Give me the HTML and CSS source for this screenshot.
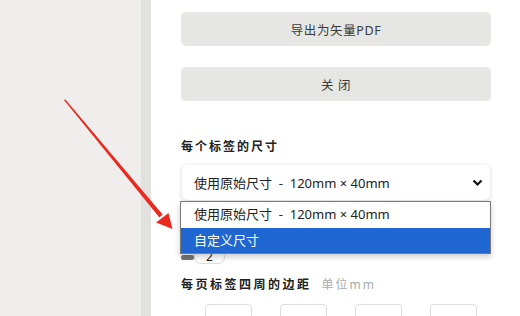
FILE: index.html
```html
<!DOCTYPE html>
<html lang="zh-CN">
<head>
  <meta charset="UTF-8" />
  <meta name="viewport" content="width=device-width, initial-scale=1.0"/>
  <title>导出设置</title>
  <link rel="stylesheet" href="styles.css">
</head>
<body>
  <div class="backdrop"></div>
  <div class="divider"></div>

  <main class="panel">
    <button class="btn">导出为矢量PDF</button>
    <button class="btn btn-close">关 闭</button>

    <h3 class="label">每个标签的尺寸</h3>
    <div class="select-wrap">
      <div class="select">
        <span>使用原始尺寸 &nbsp;-&nbsp; 120mm × 40mm</span>
        <svg class="chevron" width="11" height="8" viewBox="0 0 11 8">
          <path d="M1.5 1.5 L5.5 5.5 L9.5 1.5" fill="none" stroke="#111" stroke-width="2.2"/>
        </svg>
      </div>
      <ul class="menu">
        <li>使用原始尺寸 &nbsp;-&nbsp; 120mm × 40mm</li>
        <li class="active">自定义尺寸</li>
      </ul>
    </div>

    <div class="count-row">
      <span class="track"></span>
      <span class="count">2</span>
    </div>

    <h3 class="label label-margin">每页标签四周的边距<span class="unit">单位mm</span></h3>
    <div class="margins">
      <span class="side">上</span>
      <span class="box"></span>
      <span class="box"></span>
      <span class="side">左</span>
      <span class="box"></span>
      <span class="side">右</span>
      <span class="box"></span>
    </div>
  </main>

  <!-- annotation arrow -->
  <svg class="arrow" width="200" height="240" viewBox="0 0 200 240">
    <polygon points="64,100 65.2,99.2 162.6,214.6 159.4,217.4" fill="#ea2a1f"/>
    <polygon points="156,222.5 168.5,213 172.5,229" fill="#ea2a1f"/>
  </svg>
</body>
</html>
```

FILE: styles.css
```css
body {
  margin: 0;
  width: 520px;
  height: 316px;
  overflow: hidden;
  display: flex;
  font-family: "Noto Sans", "Noto Sans CJK SC", sans-serif;
  background: #fff;
  color: #222;
  position: relative;
}

.backdrop {
  width: 141px;
  flex-shrink: 0;
  background: #efeeed;
}

.divider {
  width: 10px;
  flex-shrink: 0;
  background: #e1e1e0;
}

.panel {
  flex: 1;
  padding: 12px 0 0 30px;
  display: flex;
  flex-direction: column;
  align-items: flex-start;
}

.panel > * {
  flex-shrink: 0;
}

.btn {
  width: 310px;
  height: 34px;
  border: none;
  border-radius: 5px;
  background: #e6e6e5;
  color: #3a3a3a;
  font-family: inherit;
  font-size: 12.5px;
  letter-spacing: 0.6px;
  padding: 0;
}

.btn-close {
  margin-top: 21px;
}

.label {
  margin: 38px 0 0;
  font-size: 12px;
  line-height: 16px;
  font-weight: bold;
  letter-spacing: 2px;
  color: #222;
}

.label-margin {
  margin-top: 13px;
  letter-spacing: 2.5px;
}

.unit {
  font-weight: normal;
  color: #aaa;
  margin-left: 10px;
  letter-spacing: 2px;
}

.select-wrap {
  position: relative;
  margin-top: 10px;
  width: 310px;
}

.select {
  margin-left: 1px;
  width: 308px;
  height: 35px;
  box-sizing: border-box;
  padding: 0 7px 0 12px;
  border-radius: 5px;
  background: #fff;
  box-shadow: 0 1px 4px rgba(0, 0, 0, 0.18);
  display: flex;
  align-items: center;
  justify-content: space-between;
  font-size: 13px;
}

.menu {
  position: absolute;
  left: -1px;
  top: 36px;
  width: 311px;
  margin: 0;
  padding: 0;
  list-style: none;
  border: 1px solid #7a7a7a;
  box-sizing: border-box;
  background: #fff;
  box-shadow: 0 3px 6px rgba(0, 0, 0, 0.2);
  font-size: 13px;
  z-index: 2;
}

.menu li {
  height: 25.5px;
  line-height: 25px;
  padding-left: 13px;
}

.menu li.active {
  background: #1f66d1;
  color: #fff;
}

.count-row {
  margin-top: 50px;
  height: 14px;
  display: flex;
  align-items: center;
}

.track {
  width: 13px;
  height: 5px;
  border-radius: 2px;
  background: #777;
}

.count {
  width: 31px;
  height: 14px;
  box-sizing: border-box;
  border: 1px solid #ddd;
  border-radius: 8px;
  font-size: 12px;
  line-height: 12px;
  text-align: center;
  color: #222;
}

.margins {
  display: flex;
  align-items: flex-start;
  margin-top: 11px;
}

.side {
  width: 24px;
  font-size: 11px;
  line-height: 30px;
  padding-top: 6px;
  color: #555;
}

.box {
  width: 47px;
  height: 30px;
  border: 1px solid #ddd;
  border-radius: 4px;
  box-sizing: border-box;
  margin-right: 28px;
}

.box + .side {
  margin-left: -20px;
  width: 20px;
}

.arrow {
  position: absolute;
  left: 0;
  top: 0;
  z-index: 3;
}
```
